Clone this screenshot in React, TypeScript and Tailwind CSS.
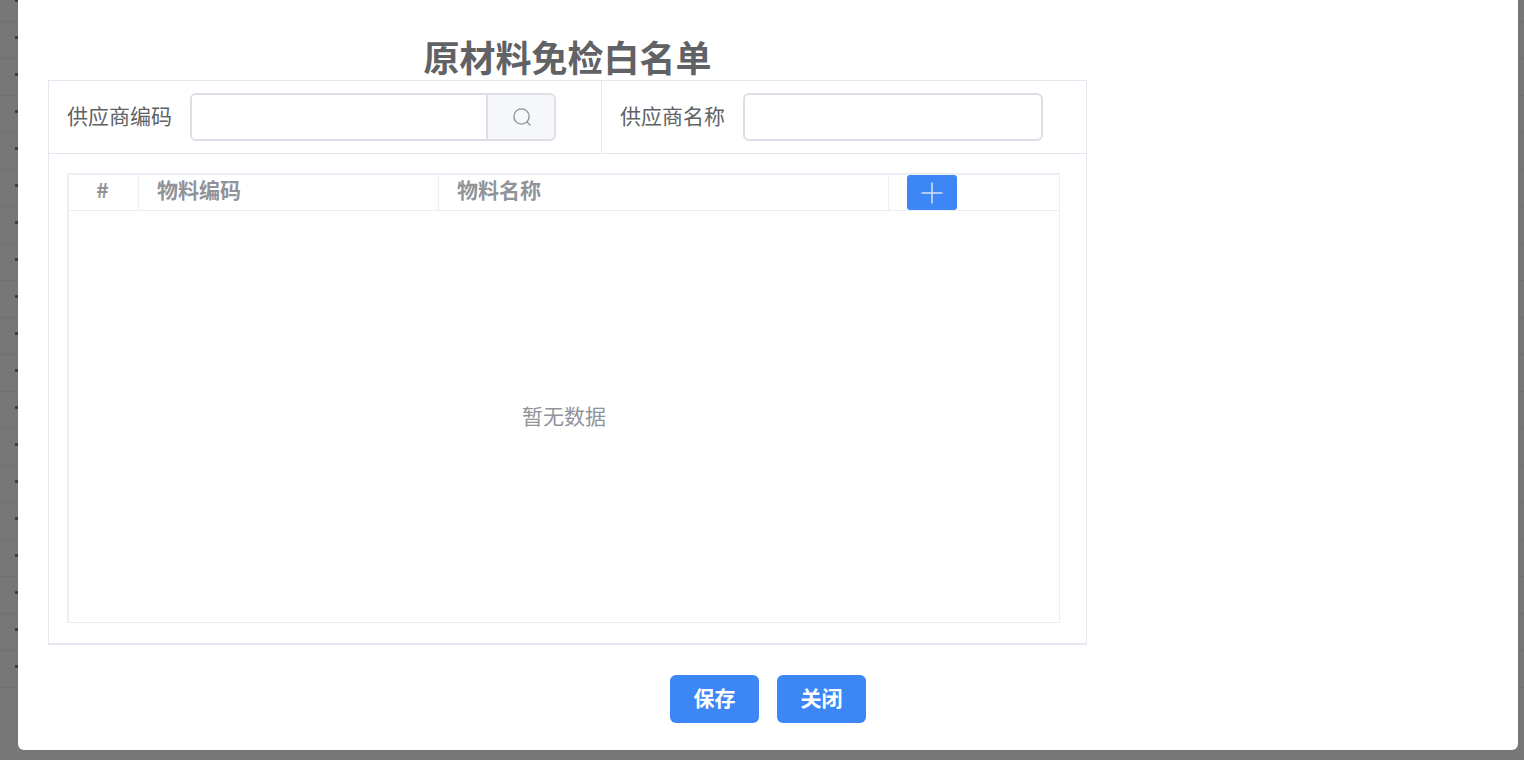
import { Plus } from 'lucide-react'

const FONT = "font-['Noto_Sans_CJK_SC','Noto_Sans',sans-serif]"
const ROWS = Array.from({ length: 19 })

function Label({ children }: { children: string }) {
  return <span className="-mt-[3px] shrink-0 pl-[18px] pr-[18px] text-[21px] text-[#606266]">{children}</span>
}

function Th({ className, children }: { className: string; children?: React.ReactNode }) {
  return (
    <div className={`flex h-full items-center border-r border-[#ebeef5] pb-[5px] text-[21px] font-bold text-[#909399] ${className}`}>
      {children}
    </div>
  )
}

function SearchIcon() {
  return (
    <svg width="21" height="21" viewBox="0 0 21 21" fill="none" stroke="currentColor" strokeWidth="1.4">
      <circle cx="10.5" cy="9.5" r="7.6" />
      <path d="M16 15l3 3" strokeLinecap="round" />
    </svg>
  )
}

export default function App() {
  return (
    <div className={`h-[760px] w-[1524px] overflow-hidden bg-[#777777] ${FONT}`}>
      {/* table rows behind the dialog */}
      <div className="-mt-[15px]">
        {ROWS.map((_, i) => (
          <div key={i} className="h-[37px] border-b border-[#707070] pl-[15px] pt-[14px]">
            <div className="h-[3px] w-[3px] rounded-[1px] bg-[#3a3a3a]" />
          </div>
        ))}
      </div>

      <div className="absolute left-[18px] top-0 flex h-[750px] w-[1500px] flex-col rounded-b-[6px] bg-white pl-[30px]">
        <div className="w-[1039px]">
          <h1 className="mt-[32px] h-[48px] text-center text-[36px] leading-[48px] font-bold text-[#606266]">原材料免检白名单</h1>

          <div className="h-[565px] border border-b-2 border-[#e4e7ed]">
            <div className="flex h-[73px] items-center border-b border-[#e4e7ed]">
              <div className="flex h-full w-[553px] items-center border-r border-[#e4e7ed]">
                <Label>供应商编码</Label>
                <div className="flex h-[48px] w-[366px] overflow-hidden rounded-[6px] border-2 border-[#dcdfe6]">
                  <div className="flex-1 bg-white" />
                  <div className="flex w-[68px] items-center justify-center border-l-2 border-[#dcdfe6] bg-[#f5f7fa] text-[#909399]">
                    <SearchIcon />
                  </div>
                </div>
              </div>
              <Label>供应商名称</Label>
              <div className="h-[48px] w-[300px] rounded-[6px] border-2 border-[#dcdfe6] bg-white" />
            </div>

            <div className="ml-[18px] mt-[19px] h-[450px] w-[993px] border border-t-2 border-l-2 border-[#ebeef5]">
              <div className="flex h-[36px] border-b border-[#ebeef5]">
                <Th className="w-[70px] justify-center pr-[2px]">#</Th>
                <Th className="w-[300px] pl-[18px]">物料编码</Th>
                <Th className="w-[450px] pl-[18px]">物料名称</Th>
                <div className="pl-[18px]">
                  <button className="flex h-[35px] w-[50px] items-center justify-center rounded-[3px] bg-[#3c87f5] text-[#d5e3f8]">
                    <Plus size={34} strokeWidth={1.1} />
                  </button>
                </div>
              </div>
              <div className="flex h-[411px] items-center justify-center pb-[2px] text-[21px] text-[#909399]">暂无数据</div>
            </div>
          </div>
        </div>

        <div className="mt-[30px] flex w-[1440px] justify-center gap-[18px]">
          <button className="h-[48px] w-[89px] rounded-[6px] bg-[#3c87f5] pb-[3px] text-[21px] font-bold text-white">保存</button>
          <button className="h-[48px] w-[89px] rounded-[6px] bg-[#3c87f5] pb-[3px] text-[21px] font-bold text-white">关闭</button>
        </div>
      </div>
    </div>
  )
}
